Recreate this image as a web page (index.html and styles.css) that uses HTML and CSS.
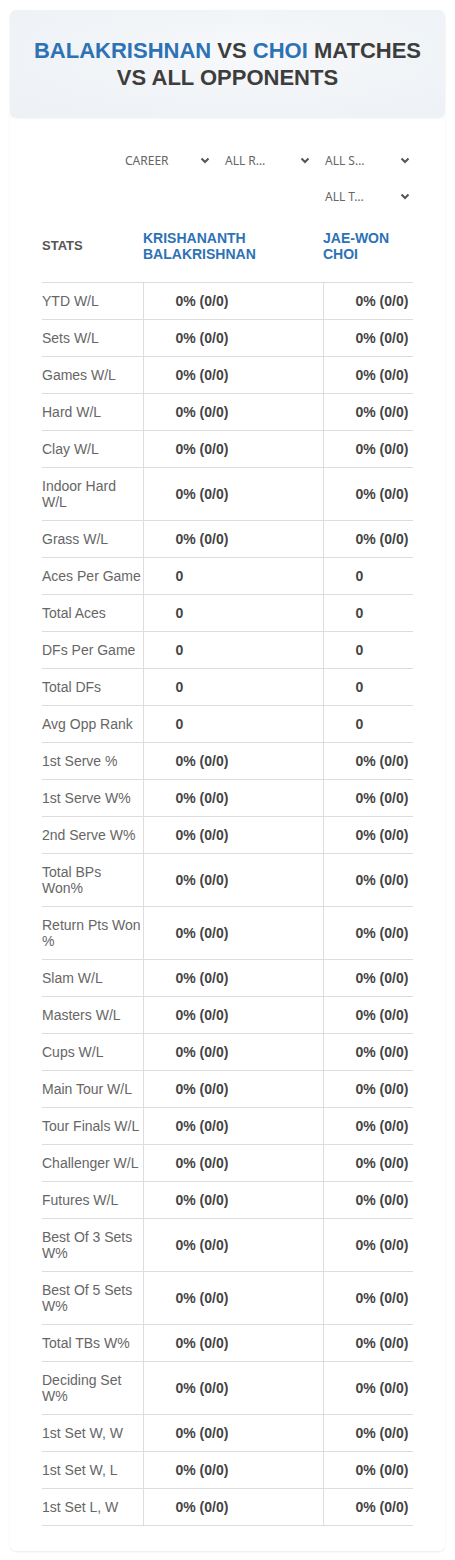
FILE: index.html
```html
<!DOCTYPE html>
<html lang="en">
<head>
    <meta charset="UTF-8">
    <meta name="viewport" content="width=device-width, initial-scale=1.0">
    <title>Balakrishnan vs Choi</title>
    <link rel="stylesheet" href="styles.css">
</head>
<body>
    <div class="card">
        <div class="head">
            <h1><span class="blue">BALAKRISHNAN</span> VS <span class="blue">CHOI</span> MATCHES VS ALL OPPONENTS</h1>
        </div>
        <div class="body">
            <div class="filters">
                <div class="select"><span>CAREER</span><svg width="10" height="7" viewBox="0 0 10 7"><path d="M1.5 1.5 5 5 8.5 1.5" fill="none" stroke="#555" stroke-width="2"/></svg></div>
                <div class="select"><span>ALL R…</span><svg width="10" height="7" viewBox="0 0 10 7"><path d="M1.5 1.5 5 5 8.5 1.5" fill="none" stroke="#555" stroke-width="2"/></svg></div>
                <div class="select"><span>ALL S…</span><svg width="10" height="7" viewBox="0 0 10 7"><path d="M1.5 1.5 5 5 8.5 1.5" fill="none" stroke="#555" stroke-width="2"/></svg></div>
                <div class="select"><span>ALL T…</span><svg width="10" height="7" viewBox="0 0 10 7"><path d="M1.5 1.5 5 5 8.5 1.5" fill="none" stroke="#555" stroke-width="2"/></svg></div>
            </div>
            <table class="stats">
                <thead>
                    <tr>
                        <th class="lbl">STATS</th>
                        <th class="name">KRISHANANTH BALAKRISHNAN</th>
                        <th class="name">JAE-WON CHOI</th>
                    </tr>
                </thead>
                <tbody id="rows"></tbody>
            </table>
        </div>
    </div>
    <script>
        // 统计项，v = true 表示百分比格式
        let rows = [
            ['YTD W/L', 1], ['Sets W/L', 1], ['Games W/L', 1], ['Hard W/L', 1], ['Clay W/L', 1],
            ['Indoor Hard W/L', 1], ['Grass W/L', 1], ['Aces Per Game', 0], ['Total Aces', 0],
            ['DFs Per Game', 0], ['Total DFs', 0], ['Avg Opp Rank', 0], ['1st Serve %', 1],
            ['1st Serve W%', 1], ['2nd Serve W%', 1], ['Total BPs Won%', 1], ['Return Pts Won %', 1],
            ['Slam W/L', 1], ['Masters W/L', 1], ['Cups W/L', 1], ['Main Tour W/L', 1],
            ['Tour Finals W/L', 1], ['Challenger W/L', 1], ['Futures W/L', 1], ['Best Of 3 Sets W%', 1],
            ['Best Of 5 Sets W%', 1], ['Total TBs W%', 1], ['Deciding Set W%', 1],
            ['1st Set W, W', 1], ['1st Set W, L', 1], ['1st Set L, W', 1]
        ]
        let html = ''
        rows.forEach(r => {
            let val = r[1] ? '0% (0/0)' : '0'
            html += '<tr><td class="lbl">' + r[0] + '</td><td class="val">' + val + '</td><td class="val">' + val + '</td></tr>'
        })
        document.querySelector('#rows').innerHTML = html
    </script>
</body>
</html>
```

FILE: styles.css
```css
* {
    margin: 0;
    padding: 0;
    box-sizing: border-box;
}

body {
    background: #fff;
    font-family: "Liberation Sans", Arial, sans-serif;
}

.card {
    margin: 10px;
    width: 435px;
    border-radius: 6px;
    background: #fff;
    box-shadow: 0 1px 2px rgba(0, 0, 0, 0.08);
    padding-bottom: 25px;
}

.head {
    padding: 27px 10px;
    border-radius: 6px;
    background: radial-gradient(ellipse at 55% 40%, #f7f9fb 0%, #eff2f6 70%, #edf1f5 100%);
    box-shadow: 0 1px 2px rgba(0, 0, 0, 0.04);
}

.head h1 {
    text-align: center;
    font-size: 22px;
    line-height: 27px;
    font-weight: bold;
    color: #3d3d3d;
}

.blue {
    color: #2d72b5;
}

.body {
    padding: 24px 32px 0;
}

.filters {
    display: flex;
    flex-wrap: wrap;
    justify-content: flex-end;
    column-gap: 5px;
    margin-right: -2px;
}

.select {
    width: 95px;
    height: 36px;
    display: flex;
    align-items: center;
    justify-content: space-between;
    padding: 0 5px 0 5px;
    font-family: "Noto Sans", sans-serif;
    font-size: 12px;
    color: #666;
}

.stats {
    width: 371px;
    border-collapse: collapse;
    table-layout: fixed;
}

.stats th {
    text-align: left;
    font-weight: bold;
    font-size: 14px;
    line-height: 16px;
    padding: 16px 0 20px;
    border-bottom: 1px solid #ddd;
}

.stats th.lbl {
    width: 101px;
    font-size: 13px;
    color: #555;
}

.stats th.name {
    color: #2d72b5;
}

.stats th:nth-child(2) {
    width: 180px;
}

.stats td {
    font-size: 14px;
    line-height: 16px;
    padding: 10px 0;
    border-bottom: 1px solid #ddd;
}

.stats td.lbl {
    color: #666;
}

.stats td.val {
    border-left: 1px solid #ddd;
    padding-left: 32px;
    font-weight: bold;
    color: #444;
}
```
